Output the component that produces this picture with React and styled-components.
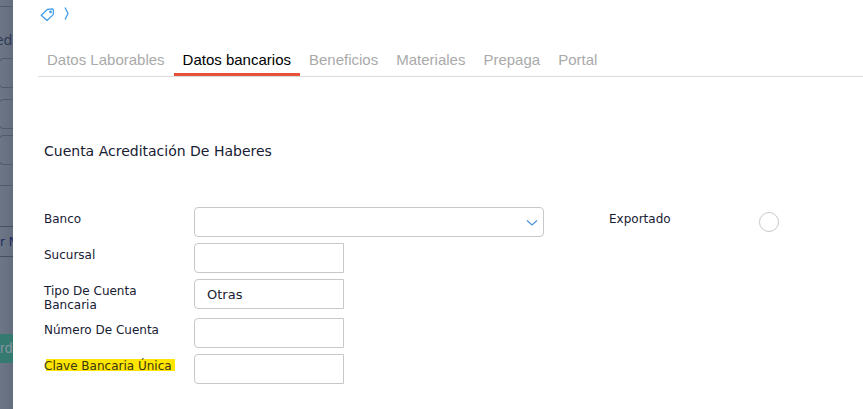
import React from "react";
import styled, { createGlobalStyle } from "styled-components";

const GlobalStyle = createGlobalStyle`
  *, *::before, *::after { box-sizing: border-box; }
  body {
    margin: 0;
    background: #fff;
    color: #172033;
    font-family: "DejaVu Sans", Verdana, sans-serif;
    font-size: 12px;
    line-height: 14px;
  }
  input, select, button { font: inherit; color: inherit; margin: 0; }
`;

const Layout = styled.div`
  display: grid;
  grid-template-columns: 13px minmax(0, 1fr);
  min-height: 100vh;
`;

const DimmedPage = styled.aside`
  display: flex;
  flex-direction: column;
  overflow: hidden;
  padding-top: 6px;
  white-space: nowrap;
  background: linear-gradient(90deg, #6c7687, #646d7e);
`;

const DimmedRule = styled.div`
  height: 1px;
  background: #525b6b;
  margin-bottom: ${(p) => p.$after}px;
`;

const DimmedTitle = styled.div`
  height: 18px;
  margin: 0 0 9px -5px;
  font-size: 14px;
  line-height: 18px;
  color: #2d3a55;
`;

const DimmedBox = styled.div`
  width: 40px;
  height: 30px;
  flex: none;
  margin: 0 0 ${(p) => p.$after}px -1px;
  border: 1px solid #525b6b;
  border-radius: 4px;
`;

const DimmedTab = styled.div`
  width: 40px;
  height: 31px;
  flex: none;
  margin-bottom: 77px;
  border: solid #454e5f;
  border-width: 1px 0;
  line-height: 31px;
  font-size: 12px;
  color: #1c2b5e;
`;

const DimmedAction = styled.div`
  width: 40px;
  height: 29px;
  flex: none;
  background: #357a71;
  font: 14px/29px "Liberation Sans", Arial, sans-serif;
  color: #8793a0;
`;

const Panel = styled.main`
  padding: 6px 0 24px 25px;
  background: #fff;
`;

const Breadcrumb = styled.nav`
  display: flex;
  align-items: center;
  gap: 8px;
  height: 16px;
  margin-bottom: 22px;
`;

const IconLink = styled.a`
  display: flex;
  color: #3d9be9;
`;

const TabBar = styled.div`
  display: flex;
  height: 33px;
  border-bottom: 1px solid #dcdcdc;
`;

const Tab = styled.button`
  padding: 2px 9px 0;
  border: 0;
  border-bottom: 3px solid ${(p) => (p.$active ? "#e8503a" : "transparent")};
  background: none;
  font: 15px/27px "Liberation Sans", Arial, sans-serif;
  color: ${(p) => (p.$active ? "#000" : "#aaa")};
`;

const Content = styled.section`
  padding: 65px 6px 0;
`;

const SectionTitle = styled.h2`
  margin: 0 0 47px;
  font-size: 14px;
  font-weight: 400;
  line-height: 18px;
`;

const Columns = styled.form`
  display: flex;
  gap: 65px;
`;

const FieldList = styled.div`
  display: flex;
  flex-direction: column;
  gap: 6px;
`;

const Field = styled.div`
  display: grid;
  grid-template-columns: 150px auto;
  justify-content: start;
  align-items: start;
`;

const Label = styled.label`
  padding: 5px 16px 0 0;
`;

const Highlight = styled.mark`
  padding-right: 3px;
  background: linear-gradient(#ffe600, #ffe600) 2px 0 / 100% 12px no-repeat;
  color: #3a3512;
`;

const TextInput = styled.input`
  width: 150px;
  height: 30px;
  padding: 0 12px;
  border: 1px solid #c8c8c8;
  border-radius: 4px 0 0 4px;
  background: #fff;
  font-size: 13px;
  outline: 0;
`;

const SelectWrap = styled.div`
  position: relative;
  width: 350px;
`;

const Select = styled.select`
  display: block;
  width: 100%;
  height: 30px;
  padding: 0 30px 0 12px;
  border: 1px solid #c8c8c8;
  border-radius: 4px;
  background: #fff;
  appearance: none;
  outline: 0;
`;

const Chevron = styled.svg`
  position: absolute;
  top: 12px;
  right: 6px;
  pointer-events: none;
`;

const RoundCheck = styled.input`
  width: 20px;
  height: 20px;
  margin-top: 5px;
  border: 1px solid #c8c8c8;
  border-radius: 50%;
  background: #fff;
  appearance: none;

  &:checked { box-shadow: inset 0 0 0 4px #fff; background: #3d9be9; }
`;

const tabs = ["Datos Laborables", "Datos bancarios", "Beneficios", "Materiales", "Prepaga", "Portal"];

const textFields = [
  { id: "sucursal", label: "Sucursal", value: "" },
  { id: "tipo", label: "Tipo De Cuenta Bancaria", value: "Otras" },
  { id: "numero", label: "Número De Cuenta", value: "" },
  { id: "clave", label: "Clave Bancaria Única", value: "", marked: true },
];

export default function App() {
  const [active, setActive] = React.useState("Datos bancarios");

  return (
    <>
      <GlobalStyle />
      <Layout>
        <DimmedPage>
          <DimmedRule $after={24} />
          <DimmedTitle>ede</DimmedTitle>
          <DimmedBox $after={11} />
          <DimmedBox $after={6} />
          <DimmedBox $after={20} />
          <DimmedRule $after={40} />
          <DimmedTab>r N</DimmedTab>
          <DimmedAction>rd</DimmedAction>
        </DimmedPage>

        <Panel>
          <Breadcrumb>
            <IconLink href="#etiqueta" aria-label="Etiqueta">
              <svg width="18" height="16" viewBox="0 0 18 16" fill="none" stroke="currentColor" strokeWidth="1.2">
                <path d="M3.2 9.2 9.5 3.3l4.7-.4c.8 0 1.2.4 1.2 1.2l-.2 4.5L9 14.5Z" strokeLinejoin="round" />
                <circle cx="12.5" cy="5.9" r="0.7" />
              </svg>
            </IconLink>
            <svg width="8" height="16" viewBox="0 0 8 16" fill="none" stroke="#3d9be9" strokeWidth="1.3" aria-hidden="true">
              <path d="m1 1.5 3 6-3 6" />
            </svg>
          </Breadcrumb>

          <TabBar role="tablist">
            {tabs.map((name) => (
              <Tab
                key={name}
                type="button"
                role="tab"
                aria-selected={name === active}
                $active={name === active}
                onClick={() => setActive(name)}
              >
                {name}
              </Tab>
            ))}
          </TabBar>

          <Content>
            <SectionTitle>Cuenta Acreditación De Haberes</SectionTitle>
            <Columns>
              <FieldList>
                <Field>
                  <Label htmlFor="banco">Banco</Label>
                  <SelectWrap>
                    <Select id="banco" defaultValue="">
                      <option value="" />
                    </Select>
                    <Chevron width="12" height="8" viewBox="0 0 12 8" fill="none" stroke="#4f93d2" strokeWidth="1.3">
                      <path d="m1 1.5 5 4.5 5-4.5" />
                    </Chevron>
                  </SelectWrap>
                </Field>
                {textFields.map((f) => (
                  <Field key={f.id}>
                    <Label htmlFor={f.id}>{f.marked ? <Highlight>{f.label}</Highlight> : f.label}</Label>
                    <TextInput id={f.id} type="text" defaultValue={f.value} />
                  </Field>
                ))}
              </FieldList>
              <FieldList>
                <Field>
                  <Label htmlFor="exportado">Exportado</Label>
                  <RoundCheck id="exportado" type="checkbox" />
                </Field>
              </FieldList>
            </Columns>
          </Content>
        </Panel>
      </Layout>
    </>
  );
}
